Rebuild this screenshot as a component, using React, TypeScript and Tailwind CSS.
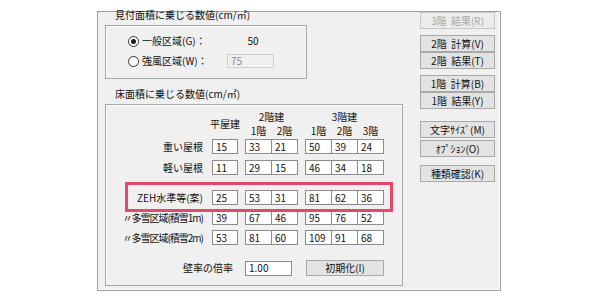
import React from "react";

function Box({ v, w = "w-[27px]", cls = "" }: { v: string; w?: string; cls?: string }) {
  return (
    <div className={`${w} h-[15px] bg-white border border-[#8c8c8c] flex items-center pl-[3px] text-[10px] leading-none text-[#111] ${cls}`}>
      {v}
    </div>
  );
}

function Row({ label, vals, tight = false, cls = "" }: { label: string; vals: string[]; tight?: boolean; cls?: string }) {
  return (
    <div className={`flex items-center h-[15px] ${cls}`}>
      <div className={`w-[97px] text-right whitespace-nowrap ${tight ? "tracking-[-1px]" : ""}`}>{label}</div>
      <Box v={vals[0]} w="w-[26px]" cls="ml-[9px]" />
      <Box v={vals[1]} cls="ml-[7px]" />
      <Box v={vals[2]} cls="-ml-px" />
      <Box v={vals[3]} cls="ml-[7px]" />
      <Box v={vals[4]} cls="-ml-px" />
      <Box v={vals[5]} cls="-ml-px" />
    </div>
  );
}

function Btn({ t, cls = "", disabled = false }: { t: string; cls?: string; disabled?: boolean }) {
  return (
    <div
      className={`w-[75px] h-[17px] flex items-center justify-center border text-[10px] leading-none whitespace-pre ${
        disabled ? "bg-[#ececec] border-[#c6c6c6] text-[#a8a8a8]" : "bg-[#e3e3e3] border-[#a8a8a8] text-[#111]"
      } ${cls}`}
    >
      {t}
    </div>
  );
}

export default function App() {
  return (
    <div className="w-[600px] h-[300px] bg-white pt-[11px] pl-[97px] font-['Noto_Sans_CJK_JP',sans-serif] text-[10px] leading-none text-[#111]">
      <div className="w-[404px] h-[280px] bg-[#f0f0f0] border border-[#9e9e9e] shadow-[inset_-1px_-1px_0_#ffffff] flex">
        {/* left column */}
        <div className="w-[315px] flex flex-col">
          <div className="ml-[17px] -mt-[2px] h-[10px] whitespace-nowrap">見付面積に乗じる数値(cm/㎡)</div>
          <div className="ml-[7px] mt-[5px] w-[202px] h-[54px] border border-[#a9a9a9] shadow-[inset_1px_1px_0_#ffffff] pt-[8px] pl-[22px] flex flex-col">
            <div className="flex items-center h-[14px]">
              <div className="w-[11px] h-[11px] rounded-full border border-[#333] bg-white flex items-center justify-center">
                <div className="w-[5px] h-[5px] rounded-full bg-[#1a1a1a]" />
              </div>
              <div className="ml-[3px] w-[85px] whitespace-nowrap">一般区域(G)：</div>
              <div className="w-[47px] text-center pl-[5px]">50</div>
            </div>
            <div className="flex items-center h-[14px] mt-[6px]">
              <div className="w-[11px] h-[11px] rounded-full border border-[#333] bg-white" />
              <div className="ml-[3px] w-[85px] whitespace-nowrap">強風区域(W)：</div>
              <div className="w-[47px] h-[14px] border border-[#cfcfcf] bg-[#f0f0f0] flex items-center pl-[3px] text-[#8a8a8a]">75</div>
            </div>
          </div>
          <div className="ml-[17px] mt-[10px] h-[10px] whitespace-nowrap">床面積に乗じる数値(cm/㎡)</div>
          <div className="ml-[7px] mt-[5px] w-[298px] h-[182px] border border-[#a9a9a9] shadow-[inset_1px_1px_0_#ffffff] pt-[5px] flex flex-col">
            {/* header */}
            <div className="flex h-[28px]">
              <div className="w-[97px]" />
              <div className="ml-[9px] w-[26px] flex items-center justify-center whitespace-nowrap">平屋建</div>
              <div className="ml-[7px] w-[53px] flex flex-col">
                <div className="h-[14px] flex items-center justify-center whitespace-nowrap">2階建</div>
                <div className="h-[14px] flex">
                  <div className="w-[27px] flex items-center justify-center">1階</div>
                  <div className="w-[27px] -ml-px flex items-center justify-center">2階</div>
                </div>
              </div>
              <div className="ml-[7px] w-[79px] flex flex-col">
                <div className="h-[14px] flex items-center justify-center whitespace-nowrap">3階建</div>
                <div className="h-[14px] flex">
                  <div className="w-[27px] flex items-center justify-center">1階</div>
                  <div className="w-[27px] -ml-px flex items-center justify-center">2階</div>
                  <div className="w-[27px] -ml-px flex items-center justify-center">3階</div>
                </div>
              </div>
            </div>
            <Row label="重い屋根" vals={["15", "33", "21", "50", "39", "24"]} cls="mt-[1px]" />
            <Row label="軽い屋根" vals={["11", "29", "15", "46", "34", "18"]} cls="mt-[6px]" />
            <div className="relative mt-[15px]">
              <Row label="ZEH水準等(案)" vals={["25", "53", "31", "81", "62", "36"]} />
              <div className="absolute left-[19px] top-[-8px] w-[268px] h-[30px] border-[3px] border-[#e8476c]" />
            </div>
            <Row label="〃多雪区域(積雪1m)" tight vals={["39", "67", "46", "95", "76", "52"]} cls="mt-[5px]" />
            <Row label="〃多雪区域(積雪2m)" tight vals={["53", "81", "60", "109", "91", "68"]} cls="mt-[5px]" />
            <div className="flex items-center h-[16px] mt-[15px]">
              <div className="w-[127px] text-right whitespace-nowrap">壁率の倍率</div>
              <Box v="1.00" w="w-[47px]" cls="ml-[12px]" />
              <div className="ml-[14px] w-[78px] h-[16px] bg-[#e3e3e3] border border-[#a8a8a8] flex items-center justify-center whitespace-nowrap">初期化(I)</div>
            </div>
          </div>
        </div>
        {/* right column */}
        <div className="ml-[7px] flex flex-col">
          <Btn t="3階  結果(R)" disabled cls="h-[13px]" />
          <Btn t="2階  計算(V)" cls="mt-[6px]" />
          <Btn t="2階  結果(T)" />
          <Btn t="1階  計算(B)" cls="mt-[6px]" />
          <Btn t="1階  結果(Y)" />
          <Btn t="文字ｻｲｽﾞ(M)" cls="mt-[12px]" />
          <Btn t="ｵﾌﾟｼｮﾝ(O)" cls="mt-[2px]" />
          <Btn t="種類確認(K)" cls="mt-[8px]" />
        </div>
      </div>
    </div>
  );
}
